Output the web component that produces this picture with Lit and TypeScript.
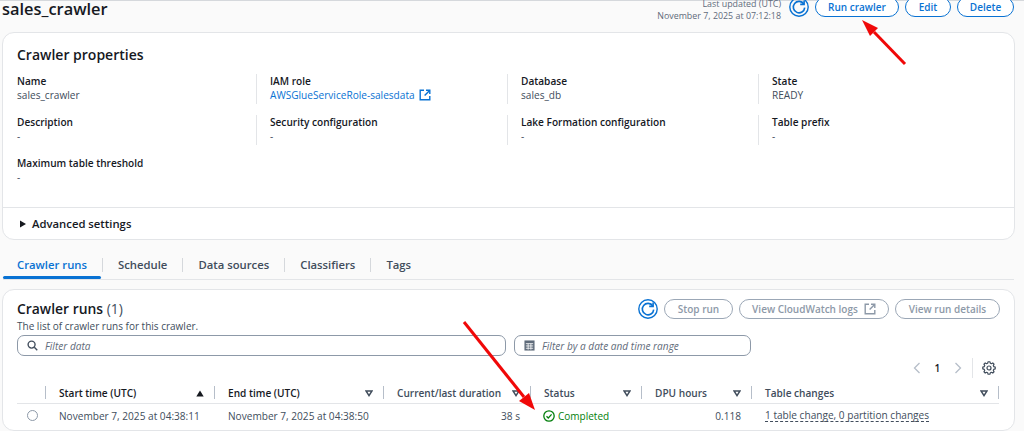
import { LitElement, html, css, svg } from "lit";
import { customElement } from "lit/decorators.js";

const refreshIcon = (size: number) => html`<svg class="refresh" width=${size} height=${size} viewBox="0 0 20 20" fill="none" stroke="#0972d3">
  <circle cx="10" cy="10" r="9.2" stroke-width="1.4"></circle>
  <path d="M14.8 7A5.7 5.7 0 1 0 15.7 10.6" stroke-width="1.6"></path>
  <path d="M11.2 7.4H15.1V3.5" stroke-width="1.6"></path>
</svg>`;

const extIcon = (color: string) => html`<svg width="12" height="12" viewBox="0 0 12 12" fill="none" stroke=${color} stroke-width="1.4">
  <path d="M5 1.2H1.2V10.8H10.8V7"></path><path d="M7 1.2H10.8V5"></path><path d="M10.6 1.4L5.6 6.4"></path>
</svg>`;

const gearPath = (() => {
  const pts: string[] = [];
  const teeth = 8;
  for (let i = 0; i < teeth; i++) {
    const c = (i / teeth) * Math.PI * 2;
    const w = Math.PI / teeth;
    const p = (r: number, a: number) => `${(7 + r * Math.cos(a)).toFixed(2)} ${(7 + r * Math.sin(a)).toFixed(2)}`;
    pts.push(p(4.9, c - w * 0.72), p(6.3, c - w * 0.36), p(6.3, c + w * 0.36), p(4.9, c + w * 0.72));
  }
  return "M" + pts.join("L") + "Z";
})();

const sortDown = html`<svg class="sort" width="8" height="7" viewBox="0 0 8 7" fill="none" stroke="#414d5c" stroke-width="1.5"><path d="M1 1H7L4 5.6Z"></path></svg>`;
const sortUp = html`<svg class="sort" width="8" height="7" viewBox="0 0 8 7" fill="#16191f"><path d="M0.3 6.4H7.7L4 0.6Z"></path></svg>`;

const arrows = svg`
  <path d="M905 64L874 32" stroke="#f00808" stroke-width="3" fill="none"></path>
  <path d="M862 20L878 28L870 36Z" fill="#f00808"></path>
  <path d="M464 322L524 397" stroke="#f00808" stroke-width="3" fill="none"></path>
  <path d="M535 410L519 401L529 393Z" fill="#f00808"></path>
`;

@customElement("app-root")
export class AppRoot extends LitElement {
  static styles = css`
    :host {
      display: block;
      position: relative;
      width: 1024px;
      height: 431px;
      overflow: hidden;
      background: #fafafa;
      font-family: "Open Sans", "Noto Sans", sans-serif;
      font-size: 10.1px;
      line-height: 14px;
      color: #16191f;
    }
    .topline { height: 1px; background: #d5d8dc; margin-bottom: -1px; }
    .header {
      display: flex;
      align-items: flex-start;
      justify-content: space-between;
      height: 32px;
      padding: 0 10px 0 2px;
      box-sizing: border-box;
    }
    h1 {
      margin: -3px 0 0;
      font-size: 16.4px;
      line-height: 24px;
      font-weight: 600;
      color: #16191f;
    }
    .actions { display: flex; align-items: flex-start; margin-top: -3px; }
    .updated {
      text-align: right;
      color: #5f6b7a;
      font-size: 8.9px;
      line-height: 12px;
      margin: 0 8px 0 0;
      padding-top: 1px;
    }
    .refresh { display: block; flex: none; }
    .actions .refresh { margin: 0 6px 0 0; }
    .btn {
      display: inline-flex;
      align-items: center;
      justify-content: center;
      gap: 6px;
      box-sizing: border-box;
      height: 20px;
      border: 1.4px solid #0972d3;
      border-radius: 10px;
      color: #0972d3;
      font-size: 10px;
      font-weight: 600;
      background: #fff;
      white-space: nowrap;
    }
    .w84 { width: 84px; }
    .w46 { width: 46px; }
    .w57 { width: 57px; }
    .w69 { width: 69px; }
    .w150 { width: 150px; }
    .w105 { width: 105px; }
    .btn.off { border-color: #9ba7b6; color: #8d99a8; }
    .actions .btn + .btn { margin-left: 6px; }
    .card {
      margin: 0 9px 0 2px;
      background: #fff;
      border: 1px solid #e3e5e8;
      border-radius: 12px;
      box-sizing: border-box;
    }
    .props { height: 208px; }
    h2 {
      margin: 0;
      font-size: 14px;
      line-height: 20px;
      font-weight: 600;
      padding: 12px 0 0 14px;
    }
    .grid {
      display: grid;
      grid-template-columns: 239px 251px 251px 1fr;
      grid-auto-rows: 41px;
      margin: 9px 0 0 14px;
      height: 133px;
    }
    .cell { height: 30px; padding-left: 13px; border-left: 1px solid #e3e5e8; }
    .cell:nth-child(4n + 1) { padding-left: 0; border-left: 0; }
    .cell:nth-child(n + 9) { border-left: 0; }
    .lbl { font-weight: 600; }
    .val { color: #414d5c; display: flex; align-items: center; gap: 4px; }
    .val a { color: #0972d3; }
    .adv {
      display: flex;
      align-items: center;
      height: 31px;
      border-top: 1px solid #e3e5e8;
      padding-left: 16px;
      font-size: 11.3px;
      font-weight: 600;
      gap: 5px;
    }
    .tabs {
      display: flex;
      align-items: center;
      height: 40px;
      margin: 0 10px 0 3px;
      padding-top: 10px;
      box-sizing: border-box;
      border-bottom: 1px solid #e3e5e8;
      font-weight: 600;
      font-size: 11.3px;
      color: #414d5c;
    }
    .tab { position: relative; padding: 0 15px; height: 14px; line-height: 14px; border-right: 1px solid #d5d8dc; white-space: nowrap; }
    .tab:last-child { border-right: 0; }
    .tab.on { color: #0972d3; padding-left: 14px; }
    .tab.on::after {
      content: "";
      position: absolute;
      left: 0;
      right: 1px;
      top: 18px;
      height: 3px;
      border-radius: 2px;
      background: #0972d3;
    }
    .runs { margin-top: 9px; height: 142px; padding: 0 14px; }
    .runs-head { display: flex; justify-content: space-between; align-items: flex-start; padding-top: 9px; height: 29px; box-sizing: border-box; }
    h3 { margin: 0; font-size: 13.9px; line-height: 20px; font-weight: 600; }
    h3 span { font-weight: 400; color: #414d5c; }
    .btns { display: flex; gap: 6px; align-items: center; }
    .desc { color: #414d5c; margin-top: 1px; font-size: 10px; line-height: 13px; }
    .filters { display: flex; gap: 8px; margin-top: 2px; }
    .input {
      display: flex;
      align-items: center;
      gap: 7px;
      box-sizing: border-box;
      height: 21px;
      border: 1px solid #8d99a8;
      border-radius: 7px;
      background: #fff;
      padding-left: 9px;
      color: #5f6b7a;
      font-style: italic;
    }
    .input.a { width: 489px; }
    .input.b { width: 237px; }
    .pager { display: flex; justify-content: flex-end; align-items: center; height: 24px; padding-right: 4px; color: #16191f; font-weight: 600; }
    .pager .n { width: 33px; text-align: center; }
    .pager .sep { width: 1px; height: 20px; background: #e3e5e8; margin: 0 9px 0 10px; }
    .table {
      display: grid;
      grid-template-columns: 29px 169px 169px 147px 111px 110px 247px;
      margin-top: 3px;
    }
    .th {
      display: flex;
      align-items: center;
      justify-content: space-between;
      height: 21px;
      box-sizing: border-box;
      padding: 0 11px 0 13px;
      border-bottom: 1px solid #e3e5e8;
      font-weight: 600;
      color: #414d5c;
      position: relative;
      white-space: nowrap;
    }
    .th.dark { color: #16191f; }
    .th::after {
      content: "";
      position: absolute;
      right: 0;
      top: 3px;
      height: 13px;
      width: 1.5px;
      background: #b6bec9;
    }
    .td { display: flex; align-items: center; height: 23px; padding: 0 0 0 13px; color: #414d5c; white-space: nowrap; }
    .td.radio { padding: 0 0 0 10px; }
    .radio i { display: block; box-sizing: border-box; width: 11px; height: 11px; border: 1px solid #8d99a8; border-radius: 50%; }
    .td.num { justify-content: flex-end; padding: 0 11px 0 0; }
    .status { color: #037f0c; gap: 3px; padding-left: 12px; font-size: 10px; }
    .dash { border-bottom: 1px dashed #414d5c; line-height: 12px; }
    .overlay { position: absolute; left: 0; top: 0; pointer-events: none; }
    .gear { display: block; }
  `;

  private cell(l: string, v: unknown) {
    return html`<div class="cell"><div class="lbl">${l}</div><div class="val">${v}</div></div>`;
  }

  render() {
    return html`
      <div class="topline"></div>
      <div class="header">
        <h1>sales_crawler</h1>
        <div class="actions">
          <div class="updated">Last updated (UTC)<br />November 7, 2025 at 07:12:18</div>
          ${refreshIcon(20)}
          <span class="btn w84">Run crawler</span>
          <span class="btn w46">Edit</span>
          <span class="btn w57">Delete</span>
        </div>
      </div>
      <section class="card props">
        <h2>Crawler properties</h2>
        <div class="grid">
          ${this.cell("Name", "sales_crawler")}
          ${this.cell("IAM role", html`<a>AWSGlueServiceRole-salesdata</a>${extIcon("#0972d3")}`)}
          ${this.cell("Database", "sales_db")}
          ${this.cell("State", "READY")}
          ${this.cell("Description", "-")}
          ${this.cell("Security configuration", "-")}
          ${this.cell("Lake Formation configuration", "-")}
          ${this.cell("Table prefix", "-")}
          ${this.cell("Maximum table threshold", "-")}
        </div>
        <div class="adv">
          <svg width="8" height="8" viewBox="0 0 8 8" fill="#16191f"><path d="M1 0.5L7 4L1 7.5Z"></path></svg>
          Advanced settings
        </div>
      </section>
      <nav class="tabs">
        <div class="tab on">Crawler runs</div>
        <div class="tab">Schedule</div>
        <div class="tab">Data sources</div>
        <div class="tab">Classifiers</div>
        <div class="tab">Tags</div>
      </nav>
      <section class="card runs">
        <div class="runs-head">
          <h3>Crawler runs <span>(1)</span></h3>
          <div class="btns">
            ${refreshIcon(20)}
            <span class="btn off w69">Stop run</span>
            <span class="btn off w150">View CloudWatch logs ${extIcon("#8d99a8")}</span>
            <span class="btn off w105">View run details</span>
          </div>
        </div>
        <div class="desc">The list of crawler runs for this crawler.</div>
        <div class="filters">
          <div class="input a">
            <svg width="11" height="11" viewBox="0 0 12 12" fill="none" stroke="#414d5c" stroke-width="1.5"><circle cx="5" cy="5" r="3.8"></circle><path d="M8 8L11.2 11.2"></path></svg>
            Filter data
          </div>
          <div class="input b">
            <svg width="11" height="11" viewBox="0 0 12 12"><rect x="0.5" y="0.5" width="11" height="11" fill="#5f6b7a"></rect><path d="M2 4H10M2 6.5H10M2 9H10M4.5 4V10.5M7.5 4V10.5" stroke="#fff" stroke-width="0.9"></path></svg>
            Filter by a date and time range
          </div>
        </div>
        <div class="pager">
          <svg width="8" height="12" viewBox="0 0 8 12" fill="none" stroke="#b6bec9" stroke-width="1.3"><path d="M6.5 1L1.5 6L6.5 11"></path></svg>
          <span class="n">1</span>
          <svg width="8" height="12" viewBox="0 0 8 12" fill="none" stroke="#b6bec9" stroke-width="1.3"><path d="M1.5 1L6.5 6L1.5 11"></path></svg>
          <span class="sep"></span>
          <svg class="gear" width="14" height="14" viewBox="0 0 14 14" fill="none" stroke="#414d5c" stroke-width="1.2" stroke-linejoin="round"><path d=${gearPath}></path><circle cx="7" cy="7" r="2"></circle></svg>
        </div>
        <div class="table">
          <div class="th"></div>
          <div class="th dark">Start time (UTC) ${sortUp}</div>
          <div class="th dark">End time (UTC) ${sortDown}</div>
          <div class="th">Current/last duration ${sortDown}</div>
          <div class="th">Status ${sortDown}</div>
          <div class="th">DPU hours ${sortDown}</div>
          <div class="th">Table changes ${sortDown}</div>
          <div class="td radio"><i></i></div>
          <div class="td">November 7, 2025 at 04:38:11</div>
          <div class="td">November 7, 2025 at 04:38:50</div>
          <div class="td num">38 s</div>
          <div class="td status">
            <svg width="12" height="12" viewBox="0 0 12 12" fill="none" stroke="#037f0c" stroke-width="1.3"><circle cx="6" cy="6" r="5.2"></circle><path d="M3.5 6.2L5.3 8L8.6 4.4"></path></svg>
            Completed
          </div>
          <div class="td num">0.118</div>
          <div class="td"><span class="dash">1 table change, 0 partition changes</span></div>
        </div>
      </section>
      <svg class="overlay" width="1024" height="431" viewBox="0 0 1024 431">${arrows}</svg>
    `;
  }
}
